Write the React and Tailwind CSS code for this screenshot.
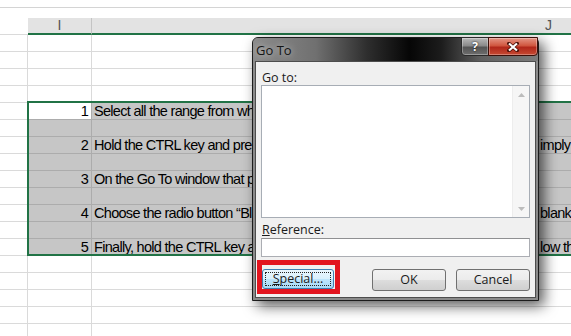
import React from 'react';

// rows below the column header, 17px each (16px cell + 1px grid line)
const rows = [
  {},
  {},
  {},
  {},
  { n: '1', text: 'Select all the range from which you want to remove blank rows.', sel: true, active: true },
  { sel: true },
  { n: '2', text: 'Hold the CTRL key and press G to open the Go To window, or simply', right: 'imply', sel: true },
  { sel: true },
  { n: '3', text: 'On the Go To window that pops up, click the Special button.', sel: true },
  { sel: true },
  { n: '4', text: 'Choose the radio button “Blanks” and click OK to select every blank', right: 'blank', sel: true },
  { sel: true },
  { n: '5', text: 'Finally, hold the CTRL key and press the minus key, then follow the', right: 'low th', sel: true },
  {},
  {},
  {},
  {},
  {},
];

const SheetRow = ({ row }) => {
  const line = row.sel ? 'border-[#acacac]' : 'border-[#dadada]';
  const fill = row.sel ? 'bg-[#c6c6c6]' : 'bg-white';
  return (
    <div className="flex h-[17px]">
      <div className="w-[28px] shrink-0 border-r border-b border-[#dadada]" />
      <div
        className={`w-[64px] shrink-0 border-r border-b ${line} ${row.active ? 'bg-white' : fill} pr-[3px] text-right leading-[16px]`}
      >
        {row.n}
      </div>
      <div className={`flex min-w-0 flex-1 overflow-hidden whitespace-nowrap border-b ${line} ${fill} pl-[2px] leading-[16px]`}>
        <span className="w-[446px] shrink-0 overflow-hidden">{row.text}</span>
        <span>{row.right}</span>
      </div>
    </div>
  );
};

const ScrollArrow = ({ down }) => (
  <div className="flex h-[17px] items-center justify-center">
    <svg width="7" height="4" viewBox="0 0 7 4">
      <path d={down ? 'M0 0h7L3.5 4z' : 'M0 4h7L3.5 0z'} fill="#bcbcbc" />
    </svg>
  </div>
);

const GoToDialog = () => (
  <div className="absolute left-[252px] top-[37px] flex h-[264px] w-[287px] flex-col rounded-t-[6px] border border-[#1c1c1c] bg-[#8a8a8a] font-['Open_Sans',sans-serif] tracking-normal shadow-[5px_5px_14px_rgba(0,0,0,0.65)]">
    {/* title bar */}
    <div className="flex h-[23px] shrink-0 rounded-t-[5px] bg-[linear-gradient(90deg,#8c8c8c_0%,#707070_22%,#2e2e2e_40%,#060606_55%,#1c1c1c_66%,#5f5f5f_80%,#7c7c7c_100%)]">
      <span className="pl-[3px] pt-[4px] text-[13px] leading-[16px] text-[#151515] [text-shadow:0_0_6px_rgba(255,255,255,0.7)]">
        Go To
      </span>
      <div className="-mt-px ml-auto flex h-[19px]">
        <div className="flex w-[28px] items-center justify-center rounded-bl-[4px] border border-[#2a2a2a] bg-[linear-gradient(180deg,#b9b9b9_0%,#8a8a8a_45%,#555555_55%,#6e6e6e_100%)] text-[12px] font-bold text-white shadow-[inset_0_0_0_1px_rgba(255,255,255,0.3)] [text-shadow:0_0_2px_#000]">
          ?
        </div>
        <div className="-ml-px flex w-[50px] items-center justify-center rounded-br-[4px] border border-[#3b0e08] bg-[linear-gradient(180deg,#e49585_0%,#d0563f_45%,#b1271a_55%,#c64a33_100%)] shadow-[inset_0_0_0_1px_rgba(255,255,255,0.3)]">
          <svg width="12" height="10" viewBox="0 0 12 10">
            <path d="M2 1.5l8 7M10 1.5l-8 7" stroke="#4a1008" strokeWidth="3.6" strokeLinecap="square" />
            <path d="M2 1.5l8 7M10 1.5l-8 7" stroke="#fff" strokeWidth="2.2" />
          </svg>
        </div>
      </div>
    </div>

    {/* client area */}
    <div className="mx-[2px] mb-[2px] flex flex-1 flex-col border border-[#4d4d4d] bg-[#f0f0f0] px-[5px] pt-[8px] text-[12.5px] text-[#1a1a1a]">
      <div className="h-[15px] pl-px leading-[15px]">Go to:</div>
      <div className="flex h-[133px] border border-[#a7adb5] bg-white">
        <div className="flex-1" />
        <div className="flex w-[17px] flex-col justify-between border-l border-[#ededed] bg-[#f6f6f6]">
          <ScrollArrow />
          <ScrollArrow down />
        </div>
      </div>
      <div className="mt-[4px] h-[16px] pl-px leading-[15px]">
        <span className="underline">R</span>eference:
      </div>
      <div className="h-[19px] border border-[#abadb3] border-t-[#8f9092] bg-white" />

      <div className="mt-[3px] flex items-start">
        <div className="-ml-[4px] border-[5px] border-[#e2141e] pt-[4px] pr-px">
          <div className="flex h-[20px] w-[72px] rounded-[3px] border border-[#3c7fb1] bg-[linear-gradient(180deg,#eaf6fd_0%,#d9f0fc_50%,#bee6fd_50%,#a7d9f5_100%)] p-[2px]">
            <span className="flex flex-1 items-center justify-center border border-dotted border-[#222] leading-none">
              <span className="underline">S</span>pecial...
            </span>
          </div>
        </div>
        <div className="ml-auto mt-[9px] flex h-[22px] w-[74px] items-center justify-center rounded-[3px] border border-[#707070] bg-[linear-gradient(180deg,#f2f2f2_0%,#ebebeb_50%,#dddddd_50%,#cfcfcf_100%)]">
          OK
        </div>
        <div className="ml-[10px] mt-[9px] flex h-[22px] w-[74px] items-center justify-center rounded-[3px] border border-[#707070] bg-[linear-gradient(180deg,#f2f2f2_0%,#ebebeb_50%,#dddddd_50%,#cfcfcf_100%)]">
          Cancel
        </div>
      </div>
    </div>
  </div>
);

export default function App() {
  return (
    <div className="relative h-[336px] w-[571px] overflow-hidden bg-white font-['Liberation_Sans',Arial,sans-serif] text-[14.5px] tracking-[-0.7px] text-black">
      <div className="h-[7px]" />
      <div className="h-px bg-[#d4d4d4]" />
      <div className="h-[10px]" />

      {/* column headers */}
      <div className="flex h-[17px] text-[14px] tracking-normal text-[#555]">
        <div className="w-[28px] shrink-0 border-b border-[#dadada]" />
        <div className="w-[64px] shrink-0 border-r border-b-2 border-r-[#c4c4c4] border-b-[#217346] bg-[#e3e3e3] text-center leading-[15px]">
          I
        </div>
        <div className="flex-1 border-b-2 border-[#217346] bg-[#e3e3e3] pl-[453px] leading-[15px]">J</div>
      </div>

      {rows.map((row, i) => (
        <SheetRow key={i} row={row} />
      ))}

      {/* selection outline */}
      <div className="absolute left-[27px] top-[101px] h-[155px] w-[600px] border-2 border-[#217346]" />

      <GoToDialog />
    </div>
  );
}
